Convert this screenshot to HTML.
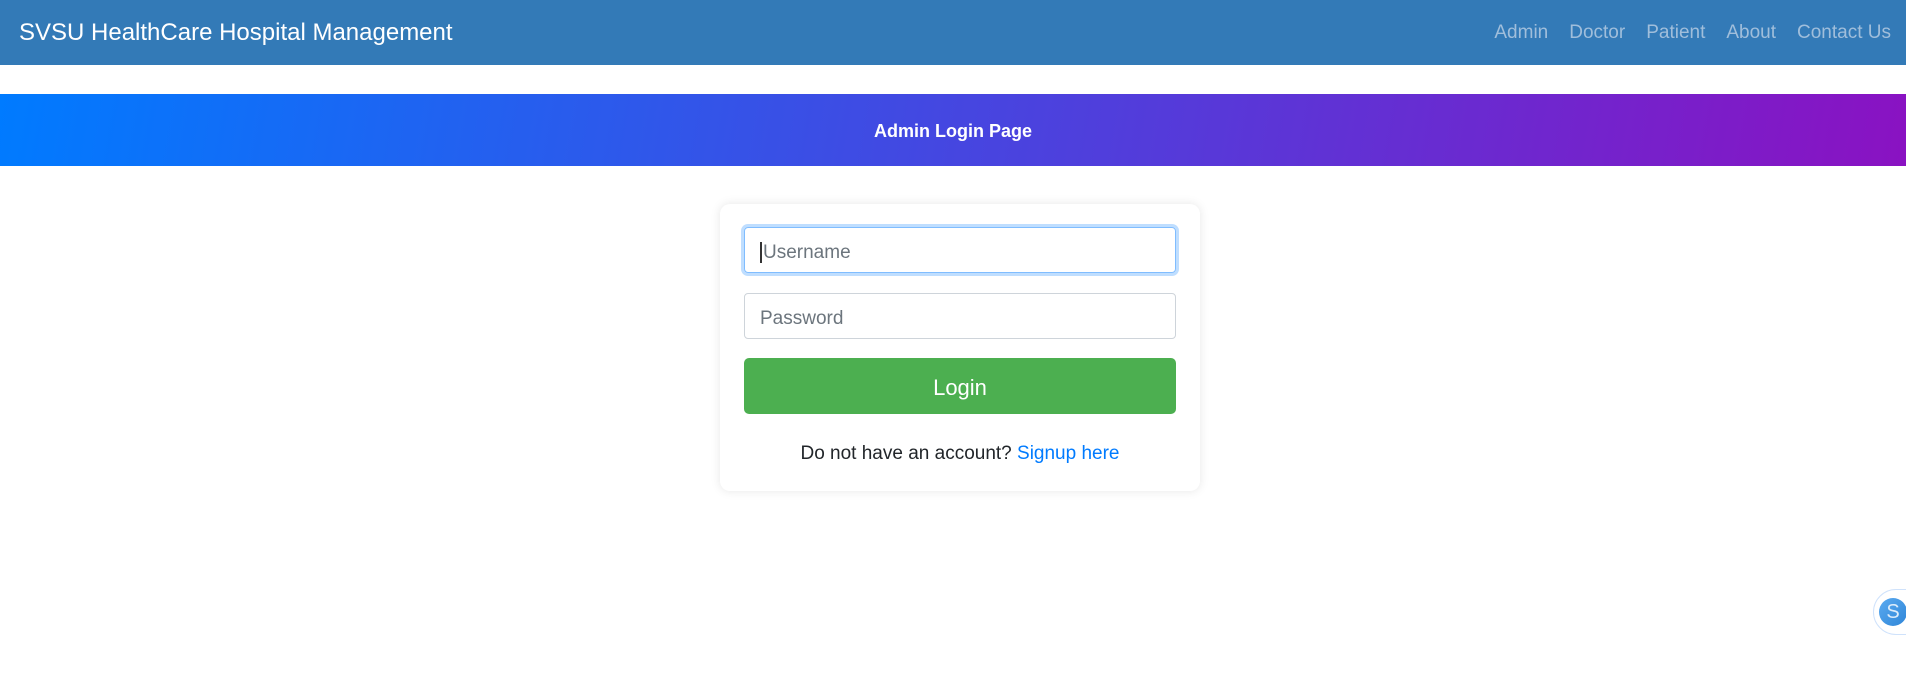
<!DOCTYPE html>
<html><head><meta charset="utf-8"><style>
*{box-sizing:border-box;margin:0;padding:0}
body{width:1906px;height:684px;background:#fff;font-family:"Liberation Sans","DejaVu Sans",sans-serif;position:relative;overflow:hidden}
.nav{position:absolute;left:0;top:0;width:1906px;height:65px;background:#337ab7}
.brand{position:absolute;left:19px;top:19px;font-size:24px;color:#fff}
.links{position:absolute;right:15px;top:22px;font-size:19px;color:#a0bedb}
.links span{margin-left:21px}
.banner{position:absolute;left:0;top:94px;width:1906px;height:72px;background:linear-gradient(100deg,#007bff,#8a12c2);color:#fff;font-weight:bold;font-size:18px;text-align:center;line-height:75px}
.card{position:absolute;left:720px;top:204px;width:480px;height:287px;background:#fff;border-radius:10px;box-shadow:0 0 10px rgba(0,0,0,.1)}
.in{position:absolute;left:24px;width:432px;height:46px;border:1px solid #ced4da;border-radius:4px;font-size:19px;color:#6c757d;padding-left:15px;line-height:49px}
.in1{top:23px;border-color:#80bdff;box-shadow:0 0 0 3px rgba(0,123,255,.25)}
.btn{position:absolute;left:24px;top:154px;width:432px;height:56px;background:#4caf50;border-radius:5px;color:#fff;font-size:22px;text-align:center;line-height:59px}
.t{position:absolute;left:0;width:480px;top:239px;text-align:center;font-size:19px;color:#212529}
.t span{color:#007bff}
.ring{position:absolute;left:1873px;top:589px;width:60px;height:46px;border:1px solid #cfe2fb;border-radius:23px}
.s{position:absolute;left:1879px;top:598px;width:28px;height:28px;border-radius:50%;background:linear-gradient(135deg,#5aaaf0,#2f86d8);color:#dcecfb;font-size:20px;text-align:center;line-height:28px}
</style></head><body>
<div class="nav"><div class="brand">SVSU HealthCare Hospital Management</div>
<div class="links"><span>Admin</span><span>Doctor</span><span>Patient</span><span>About</span><span>Contact Us</span></div></div>
<div class="banner">Admin Login Page</div>
<div class="card">
<div class="in in1"><span style="border-left:2px solid #333;padding-left:1px">Username</span></div>
<div class="in" style="top:89px">Password</div>
<div class="btn">Login</div>
<div class="t">Do not have an account? <span>Signup here</span></div>
</div>
<div class="ring"></div><div class="s">S</div>
</body></html>
